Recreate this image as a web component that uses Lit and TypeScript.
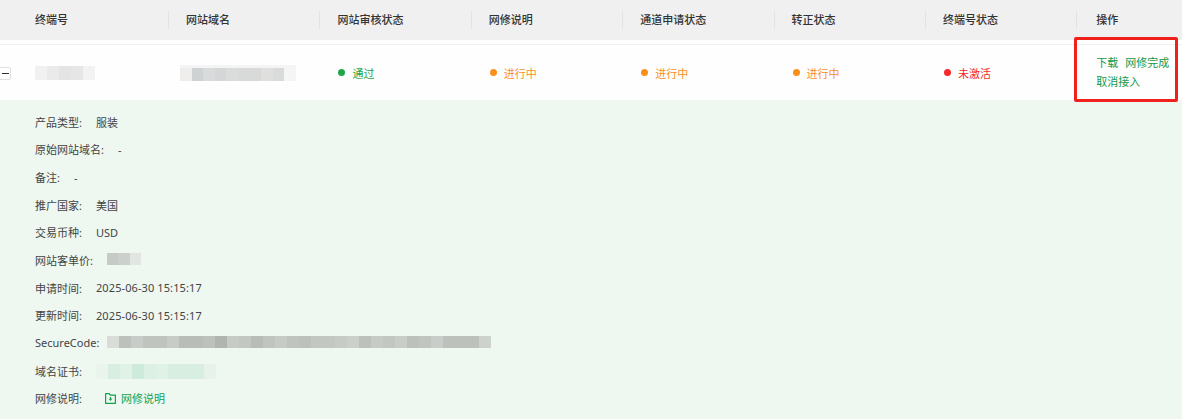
import { LitElement, html, css, svg } from "lit";
import { customElement } from "lit/decorators.js";

const HEAD = ["终端号", "网站域名", "网站审核状态", "网修说明", "通道申请状态", "转正状态", "终端号状态", "操作"];

const mosaic = (w: number, h: number, colours: string[], cls = "") => html`<span class="mosaic ${cls}" style="height:${h}px">
  ${colours.map((c) => html`<i style="width:${w}px;background:${c}"></i>`)}
</span>`;

@customElement("app-root")
export class AppRoot extends LitElement {
  static styles = css`
    :host { display: block; position: relative; width: 1182px; height: 419px; overflow: hidden; background: #fff;
      font-family: "Noto Sans", "Noto Sans CJK SC", "Liberation Sans", sans-serif; font-size: 11px; color: #333; }
    .head { display: grid; grid-template-columns: 168px repeat(6, 151.4px) 1fr; height: 40px; padding-bottom: 1px; box-sizing: border-box; background: #f0f0f0; align-items: center; }
    .head div { font-weight: 500; color: #333; padding-left: 17px; height: 18px; line-height: 18px; border-left: 1px solid #e2e2e2; white-space: nowrap; }
    .head div:first-child { padding-left: 35px; border-left: 0; }
    .head div:last-child { padding-left: 19px; }
    .gap { height: 4px; border-bottom: 1px solid #f0f0f0; }
    .row { display: grid; grid-template-columns: 168px repeat(6, 151.4px) 1fr; height: 55px; align-items: center; background: #fefefe; border-bottom: 1px solid #f2f2f2; position: relative; }
    .cell { padding-left: 19px; white-space: nowrap; display: flex; align-items: center; }
    .cell.first { padding-left: 35px; }
    .cell.second { padding-left: 12px; }
    .toggle { position: absolute; left: -4px; top: 22px; width: 15px; height: 13px; border: 1px solid #e0e0e0; border-radius: 2px; background: #fff; display: flex; align-items: center; justify-content: center; box-sizing: border-box; }
    .toggle::after { content: ""; width: 7px; height: 1px; background: #333; margin-left: 3px; }
    .status { display: flex; align-items: center; gap: 7px; }
    .dot { width: 7px; height: 7px; border-radius: 50%; background: currentColor; }
    .ok { color: #1fa648; }
    .doing { color: #fa8f1e; }
    .bad { color: #f5282e; }
    .ops { color: #13994a; line-height: 19px; padding-left: 20px; display: block; position: relative; top: -1px; }
    .ops .line { display: flex; gap: 7px; }
    .detail { background: #eef8f1; height: 318px; padding: 7px 0 0 35px; box-sizing: border-box; color: #444; }
    .item { height: 27.65px; display: flex; align-items: center; white-space: nowrap; }
    .label { margin-right: 14px; }
    .label.code { margin-right: 8px; }
    .date { letter-spacing: 0.1px; }
    .file { display: flex; align-items: center; gap: 5px; color: #13a14b; margin-left: 9px; font-weight: 400; }
    .file svg { display: block; }
    .mosaic { display: inline-flex; }
    .mosaic i { display: block; height: 100%; }
    .top { border-top: 3px solid #f4f4f4; margin-top: 1px; }
    .up { position: relative; top: -1px; }
    .down { position: relative; top: 1px; }
    .mark { position: absolute; left: 1074px; top: 37px; width: 104px; height: 65px; box-sizing: border-box; border: 3px solid #f2201c; border-radius: 2px; pointer-events: none; }
  `;

  render() {
    const g1 = ["#f1f1f1", "#eaeaea", "#e4e4e4", "#e6e6e6", "#f2f2f2"];
    const g2 = ["#f0eeed", "#cfd2d3", "#d9dadb", "#d5d6d6", "#dadbdb", "#d8d9d9", "#d9d9d9", "#dfdfdd", "#d9dbda", "#f5f5f5"];
    const price = ["#c6cbc8", "#cbd0cc", "#e2e6e3"];
    const secure = ["#d9ddd9", "#bcc1bc", "#c8ccc8", "#bfc4bf", "#bfc4bf", "#c8ccc8", "#b8bdb8", "#b8bdb8", "#bcc1bc", "#b0b5b0", "#c6cbc6", "#c2c7c2", "#b8bdb8", "#c0c5c0", "#c6cbc6", "#bfc4bf", "#bcc1bc", "#c2c7c2", "#c2c7c2", "#c6cbc6", "#cbd0cb", "#bcc1bc", "#c6cbc6", "#c2c7c2", "#c9cdc9", "#bcc1bc", "#c0c5c0", "#c9cdc9", "#bcc1bc", "#bcc1bc", "#bcc1bc", "#cdd2cd"];
    const cert = ["#e8f4ec", "#d8eee0", "#e0f1e6", "#ceeadb", "#ddf0e4", "#e0f1e6", "#d8eee1", "#d8eee1", "#d8eee1", "#e6f2ea"];
    return html`
      <div class="head">${HEAD.map((h) => html`<div>${h}</div>`)}</div>
      <div class="gap"></div>
      <div class="row">
        <span class="toggle"></span>
        <div class="cell first">${mosaic(12, 14, g1)}</div>
        <div class="cell second">${mosaic(11.6, 13, g2, "top")}</div>
        <div class="cell"><span class="status ok"><span class="dot"></span>通过</span></div>
        <div class="cell"><span class="status doing"><span class="dot"></span>进行中</span></div>
        <div class="cell"><span class="status doing"><span class="dot"></span>进行中</span></div>
        <div class="cell"><span class="status doing"><span class="dot"></span>进行中</span></div>
        <div class="cell"><span class="status bad"><span class="dot"></span>未激活</span></div>
        <div class="cell ops">
          <div class="line"><span>下载</span><span>网修完成</span></div>
          <div>取消接入</div>
        </div>
      </div>
      <div class="detail">
        <div class="item"><span class="label">产品类型:</span>服装</div>
        <div class="item"><span class="label">原始网站域名:</span>-</div>
        <div class="item"><span class="label">备注:</span>-</div>
        <div class="item"><span class="label">推广国家:</span>美国</div>
        <div class="item"><span class="label">交易币种:</span>USD</div>
        <div class="item"><span class="label">网站客单价:</span>${mosaic(11.4, 12, price, "up")}</div>
        <div class="item"><span class="label">申请时间:</span><span class="date">2025-06-30 15:15:17</span></div>
        <div class="item"><span class="label">更新时间:</span><span class="date">2025-06-30 15:15:17</span></div>
        <div class="item"><span class="label code">SecureCode:</span>${mosaic(12, 12, secure, "up")}</div>
        <div class="item"><span class="label">域名证书:</span>${mosaic(12, 15, cert, "down")}</div>
        <div class="item"><span class="label">网修说明:</span>
          <span class="file">
            <svg width="11" height="11" viewBox="0 0 11 11" fill="none" stroke="currentColor" stroke-width="1.2">
              ${svg`<path d="M.6.7h3.6l1.1 1.5h5.1v8.1H.6z" stroke-linejoin="round"/><path d="M5.5 4v2.2" /><path d="M3.6 5.8h3.8L5.5 8z" fill="currentColor" stroke="none"/>`}
            </svg>
            网修说明
          </span>
        </div>
      </div>
      <div class="mark"></div>
    `;
  }
}
